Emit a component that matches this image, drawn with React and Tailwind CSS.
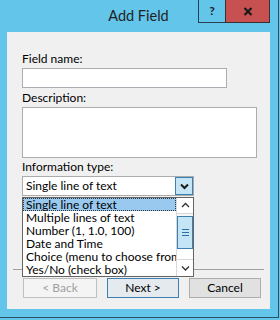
import React from "react";

const font = { fontFamily: 'Lato, "Noto Sans", sans-serif' };

function Chevron({ dir = "down", bold = false }) {
  const d = dir === "down" ? "M1 1.5 L4.5 5 L8 1.5" : "M1 5 L4.5 1.5 L8 5";
  return (
    <svg width="9" height="7" viewBox="0 0 9 7">
      <path d={d} fill="none" stroke={bold ? "#1a1a1a" : "#303030"} strokeWidth={bold ? 2 : 1.3} />
    </svg>
  );
}

export default function App() {
  const items = [
    "Single line of text",
    "Multiple lines of text",
    "Number (1, 1.0, 100)",
    "Date and Time",
    "Choice (menu to choose from)",
    "Yes/No (check box)",
  ];
  return (
    <div className="w-[280px] h-[320px] bg-[#63c5ea] overflow-hidden text-black" style={font}>
      <div className="w-[279px] h-[318px] border-r border-b border-[#2f4f63] flex flex-col">
        {/* title bar */}
        <div className="h-[32px] flex shrink-0">
          <div className="w-[79px] shrink-0" />
          <div className="flex-1 flex items-center justify-center text-[14.5px] text-[#222] pb-[1px]">
            Add Field
          </div>
          <div className="flex items-start pr-[8px] shrink-0">
            <div className="w-[27px] h-[23px] border-l border-b border-[#2b3f52] flex items-center justify-center text-[12px] font-bold text-[#1a1a1a]">
              ?
            </div>
            <div className="w-[45px] h-[23px] bg-[#c75050] border-l border-r border-b border-[#3b3030] flex items-center justify-center">
              <svg width="10" height="9" viewBox="0 0 10 9">
                <path d="M1.5 1 L8.5 8 M8.5 1 L1.5 8" stroke="#1a1a1a" strokeWidth="2.2" />
              </svg>
            </div>
          </div>
        </div>
        {/* client */}
        <div className="ml-[7px] w-[263px] h-[277px] bg-[#f0f0f0] relative flex flex-col text-[12px] leading-[16px]">
          <div className="pl-[15px] pt-[19px] flex flex-col">
            <div className="h-[16px]">Field name:</div>
            <div className="mt-[1px] w-[205px] h-[20px] bg-white border border-[#abadb3]" />
            <div className="mt-[2px] h-[16px]">Description:</div>
            <div className="mt-[1px] w-[235px] h-[51px] bg-white border border-[#abadb3]" />
            <div className="mt-[1px] h-[16px]">Information type:</div>
            <div className="mt-[1px] w-[172px] h-[20px] bg-white border border-[#acacac] flex items-center">
              <div className="flex-1 pl-[3px] whitespace-nowrap">Single line of text</div>
              <div className="w-[18px] h-[18px] bg-[#c4e5f6] border border-[#3c7fb1] flex items-center justify-center">
                <Chevron dir="down" bold />
              </div>
            </div>
          </div>
          {/* separator */}
          <div className="mt-[73px] ml-[6px] w-[251px] h-px bg-[#a0a0a0]" />
          {/* buttons */}
          <div className="mt-[8px] pl-[16px] flex gap-[10px]">
            <div className="w-[74px] h-[20px] bg-[#f4f4f4] border border-[#bfbfbf] text-[#a0a0a0] flex items-center justify-center">
              &lt; Back
            </div>
            <div className="w-[72px] h-[20px] bg-[#e5eaef] border border-[#3c7fb1] flex items-center justify-center">
              Next &gt;
            </div>
            <div className="w-[72px] h-[20px] bg-[#e1e1e1] border border-[#adadad] flex items-center justify-center">
              Cancel
            </div>
          </div>
          {/* dropdown list overlay */}
          <div className="absolute left-[15px] top-[165px] w-[172px] h-[80px] bg-white border border-[#646464] flex">
            <div className="flex-1 overflow-hidden flex flex-col">
              {items.map((t, i) => (
                <div
                  key={t}
                  className={
                    "h-[13px] leading-[13px] pl-[3px] whitespace-nowrap " +
                    (i === 0 ? "bg-[#99c9ef] outline outline-1 outline-dotted outline-[#333] -outline-offset-1" : "")
                  }
                >
                  {t}
                </div>
              ))}
            </div>
            <div className="w-[17px] border-l border-[#d9d9d9] flex flex-col bg-[#f7f7f7]">
              <div className="h-[16px] bg-white border-b border-[#d9d9d9] flex items-center justify-center">
                <Chevron dir="up" />
              </div>
              <div className="mt-[2px] h-[33px] bg-[#c4e5f6] border border-[#3c7fb1] flex flex-col items-center justify-center gap-[2px]">
                <div className="w-[7px] h-px bg-[#2a6fa8]" />
                <div className="w-[7px] h-px bg-[#2a6fa8]" />
                <div className="w-[7px] h-px bg-[#2a6fa8]" />
              </div>
              <div className="flex-1 bg-white" />
              <div className="h-[17px] bg-white border-t border-[#d9d9d9] flex items-center justify-center">
                <Chevron dir="down" />
              </div>
            </div>
          </div>
        </div>
      </div>
    </div>
  );
}
